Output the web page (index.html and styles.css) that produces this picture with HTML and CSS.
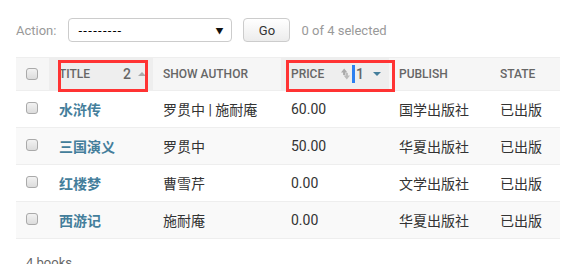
FILE: index.html
```html
<!DOCTYPE html>
<html>
<head>
<meta charset="utf-8">
<link rel="stylesheet" href="styles.css">
</head>
<body>

<div class="changelist">
	<div class="actions">
		<label class="action-label">Action:</label>
		<div class="select">
			<span class="select-text">---------</span>
			<span class="select-arrow">&#9660;</span>
		</div>
		<button class="button" type="button">Go</button>
		<span class="action-counter">0 of 4 selected</span>
	</div>

	<table class="result-list">
		<colgroup>
			<col class="col-check">
			<col class="col-title">
			<col class="col-author">
			<col class="col-price">
			<col class="col-publish">
			<col class="col-state">
		</colgroup>
		<thead>
			<tr>
				<th class="check-column"><span class="checkbox"></span></th>
				<th class="sorted">
					<span class="mark mark-title"></span>
					<div class="th-inner">
						<span class="th-text">Title</span>
						<span class="sortoptions">
							<span class="sortpriority">2</span>
							<span class="arrow arrow-up"></span>
						</span>
					</div>
				</th>
				<th><div class="th-inner"><span class="th-text">Show author</span></div></th>
				<th class="sorted">
					<span class="mark mark-price"></span>
					<div class="th-inner">
						<span class="th-text">Price</span>
						<span class="sortoptions">
							<svg class="sortremove" width="9" height="12" viewBox="0 0 9 12">
								<path d="M0 4.5 L3.2 0.5 L6.4 4.5 L4.3 4.5 L4.3 7 L2.1 7 L2.1 4.5 Z" fill="#aaa"/>
								<path d="M2.6 7.5 L5.8 11.5 L9 7.5 L6.9 7.5 L6.9 5 L4.7 5 L4.7 7.5 Z" fill="#bbb"/>
							</svg>
							<span class="cursor-bar"></span>
							<span class="sortpriority">1</span>
							<span class="arrow arrow-down"></span>
						</span>
					</div>
				</th>
				<th><div class="th-inner"><span class="th-text">Publish</span></div></th>
				<th><div class="th-inner"><span class="th-text">State</span></div></th>
			</tr>
		</thead>
		<tbody>
			<tr class="row1">
				<td class="check-column"><span class="checkbox"></span></td>
				<th class="field-title"><a href="#">水浒传</a></th>
				<td>罗贯中 | 施耐庵</td>
				<td>60.00</td>
				<td>国学出版社</td>
				<td>已出版</td>
			</tr>
			<tr class="row2">
				<td class="check-column"><span class="checkbox"></span></td>
				<th class="field-title"><a href="#">三国演义</a></th>
				<td>罗贯中</td>
				<td>50.00</td>
				<td>华夏出版社</td>
				<td>已出版</td>
			</tr>
			<tr class="row1">
				<td class="check-column"><span class="checkbox"></span></td>
				<th class="field-title"><a href="#">红楼梦</a></th>
				<td>曹雪芹</td>
				<td>0.00</td>
				<td>文学出版社</td>
				<td>已出版</td>
			</tr>
			<tr class="row2">
				<td class="check-column"><span class="checkbox"></span></td>
				<th class="field-title"><a href="#">西游记</a></th>
				<td>施耐庵</td>
				<td>0.00</td>
				<td>华夏出版社</td>
				<td>已出版</td>
			</tr>
		</tbody>
	</table>

	<p class="paginator">4 books</p>
</div>

</body>
</html>
```

FILE: styles.css
```css
body {
	margin: 0;
	padding: 0;
	background: #fff;
	color: #333;
	font-family: Roboto, "Noto Sans CJK SC", sans-serif;
	font-size: 14px;
}
.changelist {
	padding: 18px 0 0 16px;
}

/* actions bar */
.actions {
	display: flex;
	align-items: center;
	height: 24px;
	font-size: 13px;
	color: #999;
}
.action-label {
	margin-right: 12px;
}
.select {
	box-sizing: border-box;
	display: flex;
	align-items: center;
	justify-content: space-between;
	width: 164px;
	height: 24px;
	padding: 0 8px 0 9px;
	border: 1px solid #ccc;
	border-radius: 4px;
	background: #fff;
	color: #000;
}
.select-text {
	font-size: 13px;
	letter-spacing: 1.3px;
}
.select-arrow {
	font-size: 8px;
	color: #111;
}
.button {
	box-sizing: border-box;
	width: 47px;
	height: 24px;
	margin-left: 11px;
	padding: 0;
	border: 1px solid #ccc;
	border-radius: 4px;
	background: linear-gradient(#fff, #ececec);
	font-family: Roboto, sans-serif;
	font-size: 13px;
	color: #333;
}
.action-counter {
	margin-left: 11px;
	color: #999;
}

/* result table */
.result-list {
	margin-top: 15px;
	width: 544px;
	border-collapse: collapse;
	table-layout: fixed;
}
.col-check { width: 33px; }
.col-title { width: 104px; }
.col-author { width: 128px; }
.col-price { width: 108px; }
.col-publish { width: 101px; }
.col-state { width: 70px; }

.result-list thead th {
	position: relative;
	height: 32px;
	padding: 0;
	background: #f6f6f6;
	border-top: 1px solid #eee;
	border-bottom: 1px solid #eee;
	text-align: left;
	vertical-align: middle;
	font-size: 12px;
	font-weight: 500;
	color: #666;
	white-space: nowrap;
}
.result-list thead th.sorted {
	background: #eee;
}
.th-inner {
	display: flex;
	align-items: center;
	padding: 0 10px;
}
.th-text {
	flex: 1;
	text-transform: uppercase;
}
.sortoptions {
	display: flex;
	align-items: center;
}
.sortpriority {
	font-size: 14px;
	color: #666;
}
.arrow {
	width: 0;
	height: 0;
	margin-left: 7px;
	border-left: 4px solid transparent;
	border-right: 4px solid transparent;
}
.arrow-up {
	border-bottom: 4px solid #aaa;
	margin-right: -3px;
}
.arrow-down {
	border-top: 4px solid #447e9b;
	margin-left: 9px;
	margin-right: -2px;
}
.sortremove {
	margin-right: 2px;
}
.cursor-bar {
	width: 3px;
	height: 18px;
	margin-right: 1px;
	background: #2d7ff0;
}

/* annotation boxes */
.mark {
	position: absolute;
	top: 2px;
	height: 32px;
	box-sizing: border-box;
	border: 3px solid #f33;
	z-index: 1;
}
.mark-title {
	left: 9px;
	width: 90px;
}
.mark-price {
	left: 5px;
	width: 109px;
}

.result-list tbody td,
.result-list tbody th {
	height: 36px;
	padding: 0 10px;
	border-bottom: 1px solid #eee;
	text-align: left;
	vertical-align: middle;
	font-weight: normal;
	white-space: nowrap;
}
.result-list tr.row2 td,
.result-list tr.row2 th {
	background: #f9f9f9;
}
.field-title a {
	color: #447e9b;
	font-weight: bold;
	text-decoration: none;
}
.check-column {
	padding: 0 0 0 10px !important;
}
.checkbox {
	display: block;
	box-sizing: border-box;
	width: 12px;
	height: 12px;
	border: 1px solid #aaa;
	border-radius: 3px;
	background: linear-gradient(#f2f2f2, #dcdcdc);
}
tbody .checkbox {
	margin-top: -3px;
}

.paginator {
	margin: 16px 0 0 10px;
	font-size: 13px;
	color: #666;
}
```
